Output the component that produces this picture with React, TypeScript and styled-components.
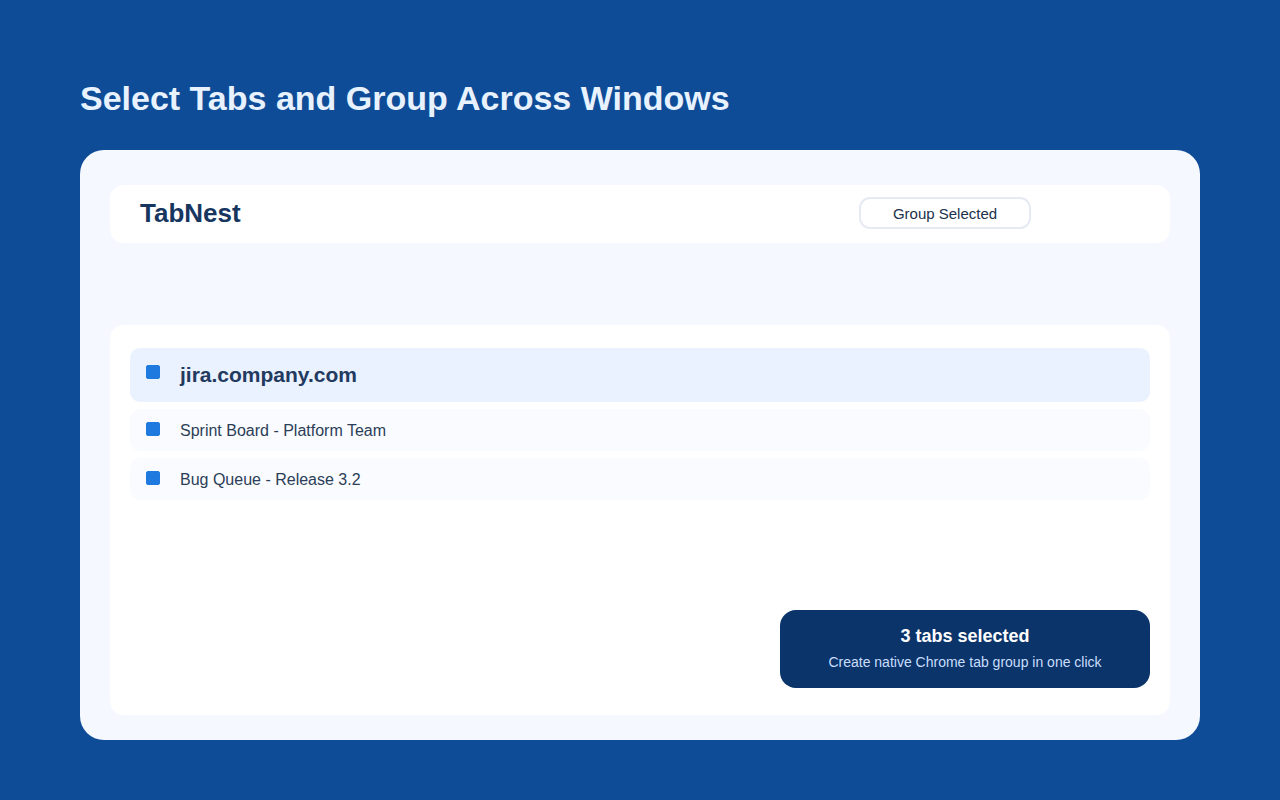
import React from "react";
import styled, { createGlobalStyle } from "styled-components";

const GlobalStyle = createGlobalStyle`
  *, *::before, *::after { box-sizing: border-box; }
  body {
    margin: 0;
    background: #0f4c97;
    font-family: "Liberation Sans", Arial, sans-serif;
  }
  h1, h2, h3, p { margin: 0; padding: 0; }
`;

const Page = styled.main`
  display: flex;
  flex-direction: column;
  min-height: 100vh;
  padding: 78px 80px 60px;
`;

const Title = styled.h1`
  margin-bottom: 32px;
  color: #e8f2ff;
  font-size: 34px;
  line-height: 40px;
`;

const Window = styled.section`
  display: flex;
  flex: 1;
  flex-direction: column;
  gap: 82px;
  padding: 35px 30px 25px;
  border-radius: 24px;
  background: #f5f8ff;
`;

const Toolbar = styled.header`
  display: flex;
  align-items: flex-start;
  justify-content: space-between;
  padding: 12px 139px 14px 30px;
  border-radius: 14px;
  background: #ffffff;
`;

const Brand = styled.h2`
  color: #17365f;
  font-size: 26px;
  line-height: 32px;
`;

const GroupButton = styled.button`
  width: 172px;
  height: 32px;
  padding: 2px 0 0;
  border: 2px solid #e5eaf3;
  border-radius: 11px;
  background: #ffffff;
  color: #20314a;
  font-family: inherit;
  font-size: 15px;
  line-height: 26px;
`;

const Panel = styled.div`
  display: flex;
  flex: 1;
  flex-direction: column;
  justify-content: space-between;
  gap: 24px;
  padding: 23px 20px 27px;
  border-radius: 14px;
  background: #ffffff;
`;

const TabList = styled.div`
  display: flex;
  flex-direction: column;
  gap: 7px;
`;

const TabRow = styled.label<{ $group?: boolean }>`
  display: flex;
  align-items: flex-start;
  gap: 20px;
  height: ${(p) => (p.$group ? "54px" : "42px")};
  padding: ${(p) => (p.$group ? "17px" : "13px")} 16px 0;
  border-radius: 10px;
  background: ${(p) => (p.$group ? "#eaf1ff" : "#f9fbff")};
  color: ${(p) => (p.$group ? "#223a60" : "#2c3e57")};
  font-size: ${(p) => (p.$group ? "21px" : "16px")};
  font-weight: ${(p) => (p.$group ? 700 : 400)};
  line-height: ${(p) => (p.$group ? "20px" : "18px")};
`;

const Check = styled.input`
  appearance: none;
  flex: none;
  width: 14px;
  height: 14px;
  margin: 0;
  border: 1px solid #c3cfe0;
  border-radius: 2px;
  background: #ffffff;

  &:checked {
    border-color: #1f7ae0;
    background: #1f7ae0;
  }
`;

const Summary = styled.aside`
  align-self: flex-end;
  width: 370px;
  max-width: 100%;
  padding: 16px 20px;
  border-radius: 16px;
  background: #0b346a;
  text-align: center;
`;

const SummaryTitle = styled.h3`
  margin-bottom: 6px;
  color: #ffffff;
  font-size: 18px;
  line-height: 20px;
`;

const SummaryText = styled.p`
  color: #c9defc;
  font-size: 14px;
  line-height: 20px;
`;

const tabs = [
  { id: "group", label: "jira.company.com", group: true },
  { id: "sprint", label: "Sprint Board - Platform Team" },
  { id: "bugs", label: "Bug Queue - Release 3.2" },
];

export default function App() {
  return (
    <>
      <GlobalStyle />
      <Page>
        <Title>Select Tabs and Group Across Windows</Title>
        <Window>
          <Toolbar>
            <Brand>TabNest</Brand>
            <GroupButton type="button">Group Selected</GroupButton>
          </Toolbar>
          <Panel>
            <TabList>
              {tabs.map((tab) => (
                <TabRow key={tab.id} htmlFor={tab.id} $group={tab.group}>
                  <Check id={tab.id} type="checkbox" defaultChecked />
                  <span>{tab.label}</span>
                </TabRow>
              ))}
            </TabList>
            <Summary>
              <SummaryTitle>3 tabs selected</SummaryTitle>
              <SummaryText>Create native Chrome tab group in one click</SummaryText>
            </Summary>
          </Panel>
        </Window>
      </Page>
    </>
  );
}
